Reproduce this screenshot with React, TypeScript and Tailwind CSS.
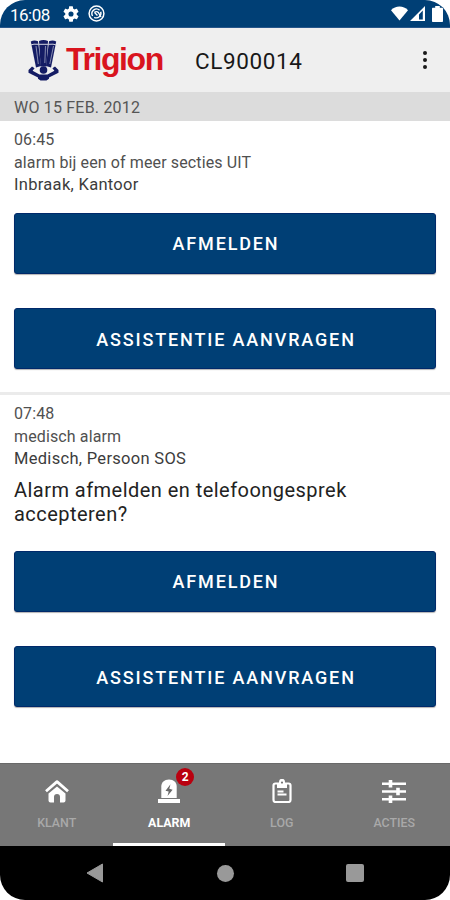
import { type ReactNode } from "react";

function StatusBar() {
  return (
    <div className="flex h-7 shrink-0 items-center justify-between border-b border-[#27568a] bg-[#003f75] pr-[7px] pl-[10px] text-white">
      <div className="flex items-center">
        <span className="w-[53px] pt-[3px] text-[17px] leading-none tracking-[-0.5px]">16:08</span>
        <svg className="h-4 w-4" viewBox="2 2 20 20" fill="currentColor">
          <path d="M19.14 12.94c.04-.3.06-.61.06-.94 0-.32-.02-.64-.07-.94l2.03-1.58a.49.49 0 0 0 .12-.61l-1.92-3.32a.49.49 0 0 0-.59-.22l-2.39.96c-.5-.38-1.03-.7-1.62-.94l-.36-2.54A.48.48 0 0 0 13.92 2.4h-3.84c-.24 0-.43.17-.47.41l-.36 2.54c-.59.24-1.13.57-1.62.94l-2.39-.96a.48.48 0 0 0-.59.22L2.74 8.87a.48.48 0 0 0 .12.61l2.03 1.58c-.05.3-.09.63-.09.94s.02.64.07.94l-2.03 1.58a.49.49 0 0 0-.12.61l1.92 3.32c.12.22.37.29.59.22l2.39-.96c.5.38 1.03.7 1.62.94l.36 2.54c.05.24.24.41.48.41h3.84c.24 0 .44-.17.47-.41l.36-2.54c.59-.24 1.13-.56 1.62-.94l2.39.96c.22.08.47 0 .59-.22l1.92-3.32a.48.48 0 0 0-.12-.61zM12 15.2a3.2 3.2 0 1 1 0-6.4 3.2 3.2 0 0 1 0 6.4z" />
        </svg>
        <svg className="ml-[9px] h-[17px] w-[17px]" viewBox="0 0 17 17" fill="none" stroke="currentColor">
          <circle cx="8.5" cy="8.5" r="7.4" strokeWidth="1.5" />
          <path d="M4.6 11a4.600 4.600 0 0 1 7-5.800M12.700 6.800a4.600 4.600 0 0 1-6.500 5.500" strokeWidth="1.400" />
          <path d="M6.500 7.500a2.500 2.500 0 0 1 3.800 0l2.700 4.500M6.500 7.500l3 3" strokeWidth="1.400" />
        </svg>
      </div>
      <div className="flex items-center">
        <svg className="h-[15px] w-[17px]" viewBox="0 0 17 15" fill="currentColor">
          <path d="M8.5 14.5L0 4.2C4.5-.6 12.5-.6 17 4.2z" />
        </svg>
        <svg className="ml-[2px] h-[15px] w-[15px]" viewBox="0 0 15 15" fill="currentColor">
          <path fillRule="evenodd" d="M0 15L15 0V15zM9 8.5V13.4H12.8V4.6z" />
        </svg>
        <svg className="ml-[7px] h-4 w-[11px]" viewBox="0 0 11 16" fill="currentColor">
          <path d="M3.200 0h4.600v1.700H10c.6 0 1 .4 1 1V15c0 .6-.4 1-1 1H1c-.6 0-1-.4-1-1V2.700c0-.6.4-1 1-1h2.200z" />
        </svg>
      </div>
    </div>
  );
}

function Logo() {
  return (
    <div className="flex items-center">
      <svg className="h-[41px] w-[31px]" viewBox="0 0 31 41">
        <g fill="#141c64">
          <path d="M2.800 1.500Q6-.3 10 1.200L13 26 8 27.500z" />
          <path d="M11 1q4.500-1.800 9 0l-1.600 25.500h-5.800z" />
          <path d="M21 1.200q4-1.500 7.200.3L23 27.500 18 26z" />
          <circle cx="15.500" cy="30" r="3.800" />
          <path d="M4 26.500L.5 30v2.800l9.500 4.700v1.200l2.500 1.800h6l2.500-1.800v-1.200l9.500-4.700V30L27 26.500l-2.600 1.700 2 2.500-6.900 3.800h-8l-6.900-3.800 2-2.500z" />
        </g>
        <path d="M2.500 5q3-1.300 8-.7h10q5-.6 8 .7" fill="none" stroke="#d5d7e2" strokeWidth="1" />
        <path d="M8 6l2.300 18M17.500 6l-.7 17M25.500 6l-3.700 18" stroke="#a3a8c4" strokeWidth=".8" />
      </svg>
      <span className="mb-[3px] ml-[7px] font-['Liberation_Sans',sans-serif] text-[32px] leading-10 font-bold tracking-[-1.400px] text-[#d9141e]">
        Trigion
      </span>
    </div>
  );
}

function Header() {
  return (
    <header className="flex h-16 shrink-0 items-center bg-[#efefef] pr-5 pl-7">
      <div className="w-[167px]">
        <Logo />
      </div>
      <h1 className="flex-1 pt-px text-[22.500px] leading-7 tracking-[0.600px] text-[#181818]">CL900014</h1>
      <div className="mr-[3px] flex flex-col gap-[3px]">
        <div className="h-1 w-1 rounded-full bg-[#181818]" />
        <div className="h-1 w-1 rounded-full bg-[#181818]" />
        <div className="h-1 w-1 rounded-full bg-[#181818]" />
      </div>
    </header>
  );
}

function Button({ children }: { children: ReactNode }) {
  return (
    <button className="block h-[61px] w-full rounded-[3px] border border-[#00296a] bg-[#003f75] pt-px pl-0.5 text-[18px] font-medium tracking-[1.850px] text-white shadow-[0_1px_1px_rgba(0,0,0,0.3)]">
      {children}
    </button>
  );
}

type AlarmProps = {
  time: string;
  title: string;
  zone: string;
  question?: string;
};

function Alarm({ time, title, zone, question }: AlarmProps) {
  return (
    <section className="px-[14px] pt-2">
      <div className="text-[16px] leading-[22.500px] tracking-[0.120px] text-[#505050]">
        <p>{time}</p>
        <p>{title}</p>
        <p className="text-[16.500px] tracking-[0.300px] text-[#3c3c3c]">{zone}</p>
      </div>
      {question && (
        <p className="mt-[7px] mb-6 text-[20px] leading-[24.500px] tracking-[0.460px] text-[#222]">{question}</p>
      )}
      <div className="mt-4 flex flex-col gap-[34.500px]">
        <Button>AFMELDEN</Button>
        <Button>ASSISTENTIE AANVRAGEN</Button>
      </div>
    </section>
  );
}

function HomeIcon() {
  return (
    <svg className="h-6 w-6" viewBox="0 0 24 24" fill="#fff">
      <path d="M1 12.300L12 2.600l11 9.700" fill="none" stroke="#fff" strokeWidth="2.800" strokeLinejoin="round" />
      <path d="M12 7.400l8.500 7.200v7a2 2 0 0 1-2 2H15v-5.500a3 3 0 0 0-6 0v5.500H5.500a2 2 0 0 1-2-2v-7z" />
    </svg>
  );
}

function AlarmIcon() {
  return (
    <svg className="h-6 w-6" viewBox="0 0 24 24" fill="#fff">
      <path d="M4.300 19V7.500c0-4 3-6.900 7.700-6.900s7.700 2.900 7.700 6.900V19z" />
      <path d="M1 20h22v4H1z" />
      <path d="M13.500 5.200L8.500 11.800l3.200.7-1.200 4.500 5.100-6.300-3.300-.9z" fill="#6a6a6a" />
    </svg>
  );
}

function LogIcon() {
  return (
    <svg className="h-6 w-6" viewBox="0 0 24 24" fill="none">
      <rect x="3.500" y="4.500" width="17" height="18.500" rx="2" stroke="#fff" strokeWidth="2.200" />
      <path d="M7 9V4.500h2a3.100 3.100 0 0 1 6 0h2V9z" fill="#fff" />
      <path d="M9 4V2.800A3 3 0 0 1 15 2.800V4z" fill="#fff" />
      <circle cx="12" cy="3.600" r="1.100" fill="#777" />
      <path d="M7.500 12.500h6M7.500 15.500h9" stroke="#fff" strokeWidth="1.900" />
    </svg>
  );
}

function ActionsIcon() {
  return (
    <svg className="h-6 w-6" viewBox="0 0 24 24" stroke="#fff" strokeWidth="2.400">
      <path d="M0 4.700h24M0 12.500h24M0 20.300h24" />
      <path d="M8.500 1v7.400M16 8.800v7.400M8.500 16.600V24" strokeWidth="3.600" />
    </svg>
  );
}

const tabs = [
  { label: "KLANT", icon: <HomeIcon /> },
  { label: "ALARM", icon: <AlarmIcon />, active: true, badge: 2 },
  { label: "LOG", icon: <LogIcon /> },
  { label: "ACTIES", icon: <ActionsIcon /> },
];

function TabBar() {
  return (
    <nav className="grid h-[83px] shrink-0 grid-cols-4 border-t border-[#696969] bg-[#777]">
      {tabs.map((tab) => (
        <div
          key={tab.label}
          className={
            tab.active
              ? "flex flex-col items-center border-b-[3px] border-white pt-[15px] pl-px font-bold text-white"
              : "flex flex-col items-center border-b-[3px] border-transparent pt-[15px] pl-px font-medium text-[#a9a9a9]"
          }
        >
          <div className="relative">
            {tab.icon}
            {tab.badge && (
              <span className="absolute -top-[11px] left-[19px] flex h-[18px] w-[18px] items-center justify-center rounded-full bg-[#b9000f] text-[12px] leading-none font-bold text-white">
                {tab.badge}
              </span>
            )}
          </div>
          <span className="mt-3 text-[12.400px] leading-4">{tab.label}</span>
        </div>
      ))}
    </nav>
  );
}

function SystemNav() {
  return (
    <div className="flex h-[54px] shrink-0 items-center justify-between bg-black px-[86px]">
      <svg className="h-5 w-[17px]" viewBox="0 0 17 20">
        <path d="M16.500 1v18L1 10z" fill="#999" stroke="#999" strokeLinejoin="round" />
      </svg>
      <div className="ml-0.5 h-[17px] w-[17px] rounded-full bg-[#999]" />
      <div className="h-[18px] w-[18px] rounded-[2px] bg-[#999]" />
    </div>
  );
}

export default function App() {
  return (
    <div className="flex h-[900px] w-[450px] flex-col overflow-hidden rounded-[25px] bg-white font-[Roboto,sans-serif]">
      <StatusBar />
      <Header />
      <div className="h-[29px] shrink-0 bg-[#dcdcdc] pl-[14px] text-[16px] leading-[31px] tracking-[0.2px] text-[#555]">
        WO 15 FEB. 2012
      </div>
      <main className="flex-1">
        <Alarm time="06:45" title="alarm bij een of meer secties UIT" zone="Inbraak, Kantoor" />
        <div className="mt-[23px] h-[3px] bg-[#ebebeb]" />
        <Alarm
          time="07:48"
          title="medisch alarm"
          zone="Medisch, Persoon SOS"
          question="Alarm afmelden en telefoongesprek accepteren?"
        />
      </main>
      <TabBar />
      <SystemNav />
    </div>
  );
}
